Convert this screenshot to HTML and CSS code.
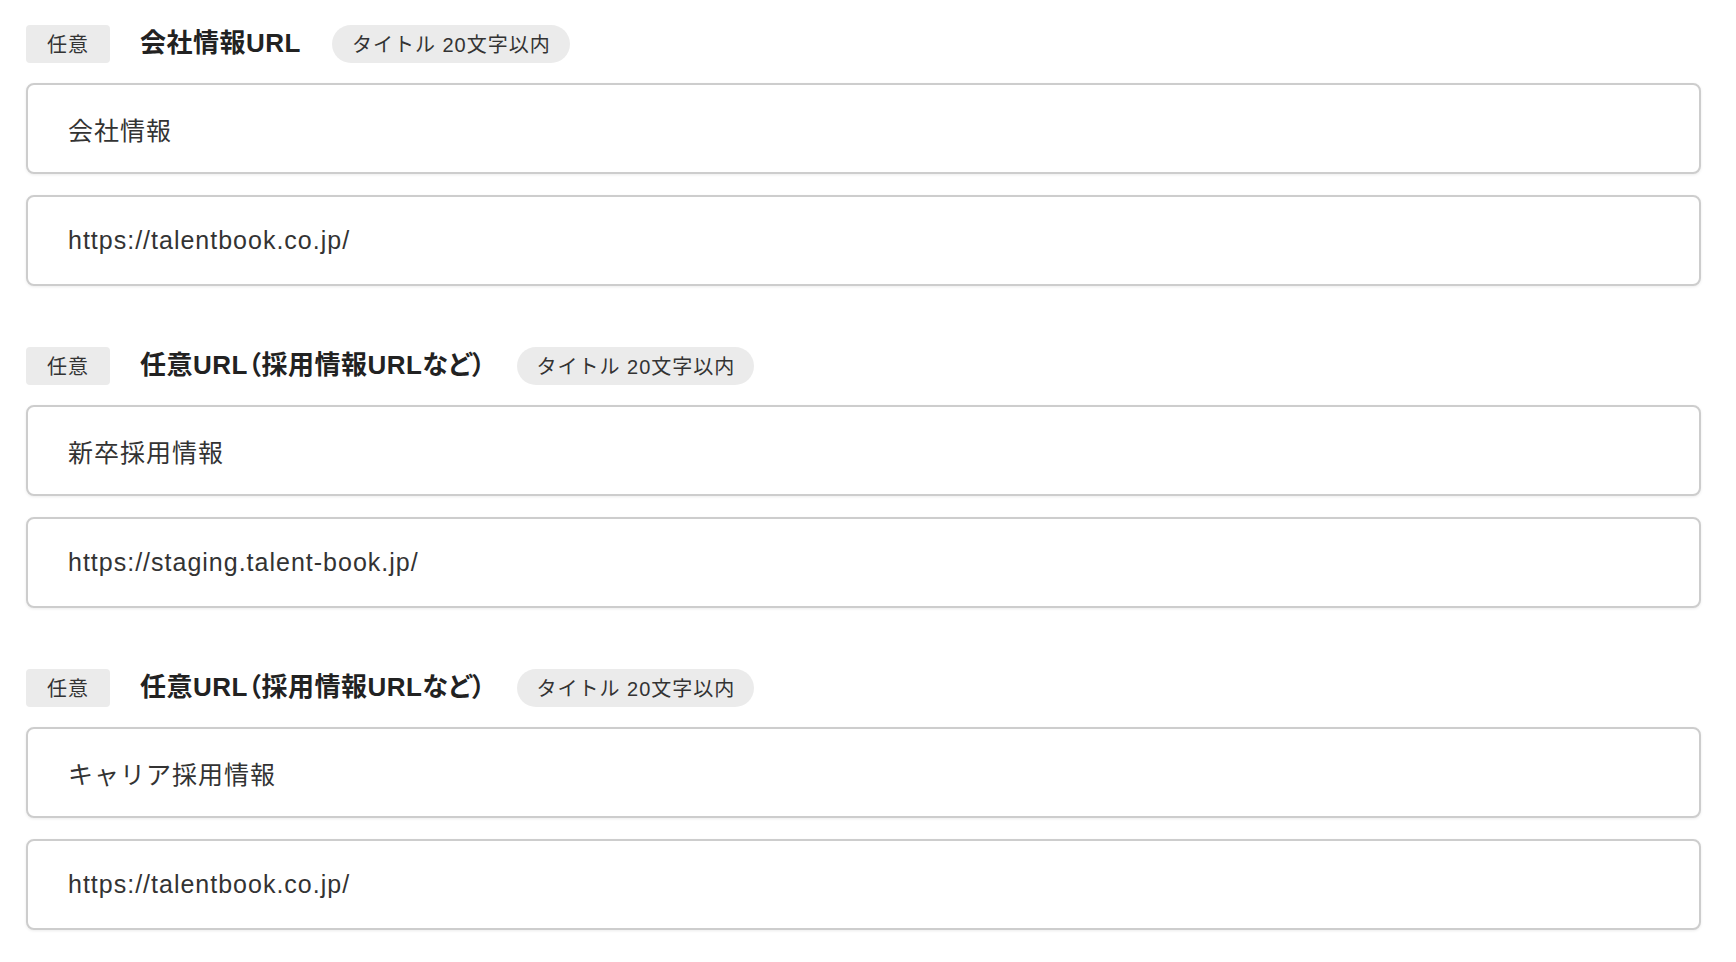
FILE: index.html
```html
<!DOCTYPE html>
<html lang="ja">
<head>
    <meta charset="UTF-8">
    <meta name="viewport" content="width=device-width, initial-scale=1.0">
    <title>URL設定</title>
    <link rel="stylesheet" href="styles.css">
</head>
<body>
    <div class="form">
        <section class="field-group">
            <div class="field-head">
                <span class="badge">任意</span>
                <h3 class="field-title">会社情報URL</h3>
                <span class="hint">タイトル 20文字以内</span>
            </div>
            <input class="text-input" type="text" value="会社情報">
            <input class="text-input" type="text" value="https://talentbook.co.jp/">
        </section>

        <section class="field-group">
            <div class="field-head">
                <span class="badge">任意</span>
                <h3 class="field-title">任意URL（採用情報URLなど）</h3>
                <span class="hint">タイトル 20文字以内</span>
            </div>
            <input class="text-input" type="text" value="新卒採用情報">
            <input class="text-input" type="text" value="https://staging.talent-book.jp/">
        </section>

        <section class="field-group">
            <div class="field-head">
                <span class="badge">任意</span>
                <h3 class="field-title">任意URL（採用情報URLなど）</h3>
                <span class="hint">タイトル 20文字以内</span>
            </div>
            <input class="text-input" type="text" value="キャリア採用情報">
            <input class="text-input" type="text" value="https://talentbook.co.jp/">
        </section>
    </div>
</body>
</html>
```

FILE: styles.css
```css
body {
    margin: 0;
    background: #fff;
    color: #333;
    font-family: "Liberation Sans", "Noto Sans CJK JP", sans-serif;
}
.form {
    padding: 25px 35px 0 26px;
}
.field-group {
    display: flex;
    flex-direction: column;
    gap: 21px;
    margin-bottom: 61px;
}
.field-head {
    display: flex;
    align-items: center;
    height: 38px;
    margin-bottom: -1px;
}
.badge {
    height: 38px;
    line-height: 40px;
    padding: 0 21px;
    background: #ebebeb;
    border-radius: 4px;
    font-size: 20px;
    letter-spacing: 1px;
    color: #333;
}
.field-title {
    margin: -2px 31px 0 30px;
    line-height: 38px;
    font-size: 26px;
    font-weight: bold;
    letter-spacing: 0.5px;
    font-feature-settings: "palt";
    color: #222;
}
.hint {
    height: 38px;
    line-height: 40px;
    padding: 0 19px 0 20px;
    background: #ebebeb;
    border-radius: 19px;
    font-size: 20px;
    letter-spacing: 1px;
    color: #333;
}
.text-input {
    box-sizing: border-box;
    width: 100%;
    height: 91px;
    padding: 0 40px;
    border: 2px solid #cdcdcd;
    border-radius: 8px;
    box-shadow: 0 1px 3px rgba(0, 0, 0, 0.08);
    font-family: "Liberation Sans", "Noto Sans CJK JP", sans-serif;
    font-size: 25px;
    letter-spacing: 1px;
    color: #333;
    background: #fff;
    outline: none;
}
```
